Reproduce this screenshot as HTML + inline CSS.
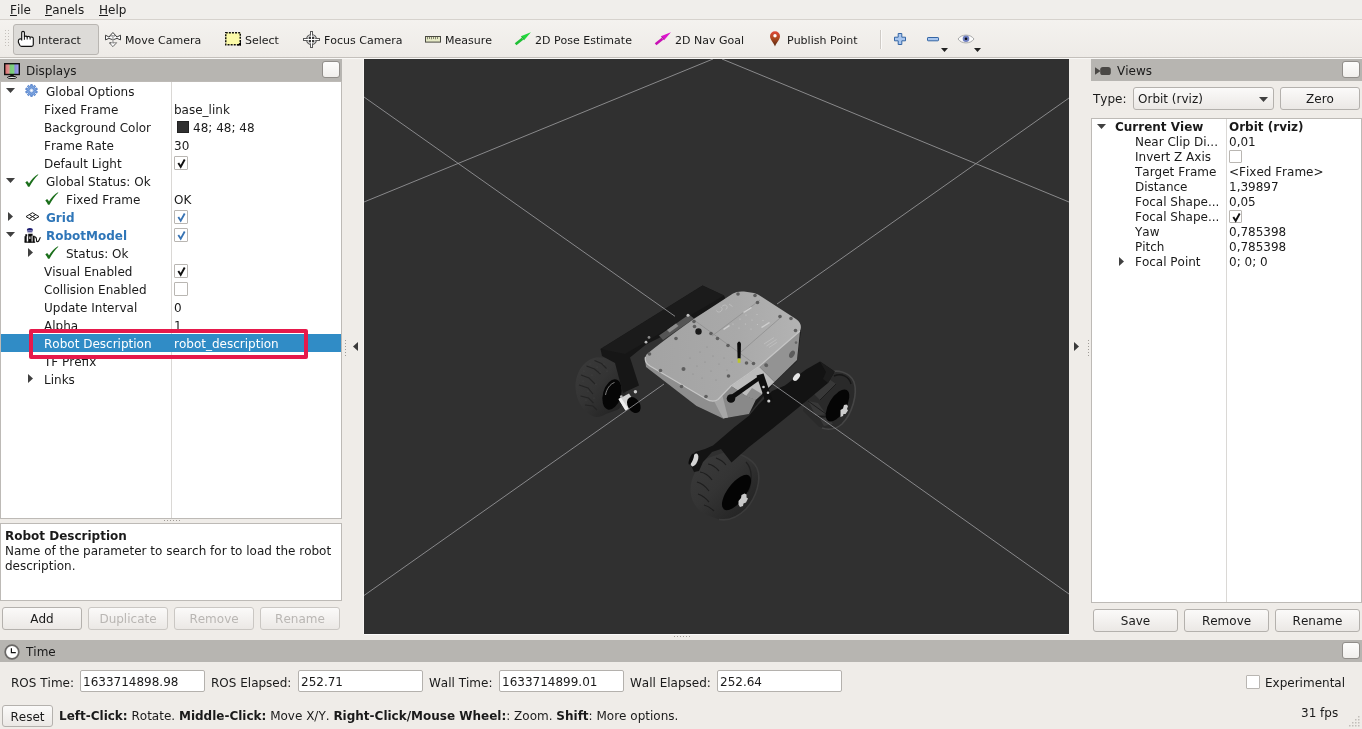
<!DOCTYPE html>
<html lang="en">
<head>
<meta charset="utf-8">
<title>RViz</title>
<style>
*{box-sizing:border-box;margin:0;padding:0}
html,body{width:1362px;height:729px;overflow:hidden}
body{position:relative;will-change:transform;font-kerning:none;background:#efece8;font-family:"DejaVu Sans","Liberation Sans",sans-serif;font-size:12px;color:#1a1a1a;line-height:14px}
.abs{position:absolute}
.t{position:absolute;white-space:nowrap;line-height:14px}
u{text-decoration:underline;text-underline-offset:1px}
/* menubar */
#menubar{position:absolute;left:0;top:0;width:1362px;height:20px;border-bottom:1px solid #d6d2cd;background:#f0eeeb}
/* toolbar */
#toolbar{position:absolute;left:0;top:20px;width:1362px;height:38px;border-bottom:1px solid #c4c0bb;font-size:11px;background:linear-gradient(#f4f2ef,#eeebe7)}
#toolbar .t{line-height:13px;top:14px}
#tb-interact{position:absolute;left:13px;top:4px;width:86px;height:31px;border:1px solid #b9b6b2;border-radius:3px;background:#dddbd8}
/* dock title */
.dock-title{position:absolute;height:22px;background:#b7b5b1}
.dock-btn{position:absolute;width:18px;height:17px;border:1px solid #918e8a;border-radius:3px;background:linear-gradient(#fdfdfc,#f1efec)}
/* trees */
.tree{position:absolute;background:#fff;border:1px solid #bdbab6}
.btn{position:absolute;height:23px;border:1px solid #b4b1ad;border-radius:3px;background:linear-gradient(#fbfaf9,#ebe8e5);text-align:center;line-height:23px;font-size:12px}
.btn.dis{color:#b9b6b3;border-color:#cac7c3}
.field{position:absolute;height:22px;border:1px solid #b4b1ad;border-radius:2px;background:#fff;line-height:22px;padding-left:2px}
.cb{position:absolute;width:13px;height:13px;border:1px solid #b9b6b2;background:#fff;border-radius:1px}

.row{position:absolute;z-index:1;left:0;width:340px;height:18px;line-height:18px;white-space:nowrap}
.row span{position:absolute;top:1px}
.row .v{left:173px}
.row.sel{background:#308cc6;color:#fff}
.b{font-weight:bold;color:#2f76b8}
.ad{position:absolute;width:9px;height:5px;background:#404040;clip-path:polygon(0 0,100% 0,50% 100%)}
.ar{position:absolute;width:5px;height:9px;background:#404040;clip-path:polygon(0 0,100% 50%,0 100%)}
.row .cb{top:2px;left:173px;width:14px;height:14px}
.ic{position:absolute}
.vrow{position:absolute;left:0;width:269px;height:15px;line-height:15px;white-space:nowrap}
.vrow span{position:absolute;top:1px}
.vrow .v{left:137px}
.vrow .cb{top:1px;left:137px;width:13px;height:13px}
</style>
</head>
<body>

<!-- MENUBAR -->
<div id="menubar">
  <span class="t" style="left:10px;top:3px"><u>F</u>ile</span>
  <span class="t" style="left:45px;top:3px"><u>P</u>anels</span>
  <span class="t" style="left:99px;top:3px"><u>H</u>elp</span>
</div>

<!-- TOOLBAR -->
<div id="toolbar">
  <div id="tb-interact"></div>
  <svg class="abs" style="left:4px;top:9px" width="6" height="20" viewBox="0 0 6 20"><g fill="#c4c0bb"><rect x="1" y="1" width="1" height="1"/><rect x="4" y="1" width="1" height="1"/><rect x="1" y="4" width="1" height="1"/><rect x="4" y="4" width="1" height="1"/><rect x="1" y="7" width="1" height="1"/><rect x="4" y="7" width="1" height="1"/><rect x="1" y="10" width="1" height="1"/><rect x="4" y="10" width="1" height="1"/><rect x="1" y="13" width="1" height="1"/><rect x="4" y="13" width="1" height="1"/><rect x="1" y="16" width="1" height="1"/><rect x="4" y="16" width="1" height="1"/></g></svg>
  <svg class="abs" style="left:17px;top:10px" width="18" height="18" viewBox="-1 -1 18 18"><path d="M3.700 9.500V1.600C3.700 -.1 6.400 -.1 6.400 1.600V5.600C7.200 5 8.800 5 9.200 5.900C10 5.200 11.700 5.300 12.100 6.300C13 5.700 15.300 6 15.300 7.600V13.600C15.300 14.800 14.600 15.400 13.600 15.400H3.600C2.600 15.400 2.200 14.900 1.800 14.200L.8 12.300C0 10.700 .2 8.600 1.600 8C2.300 7.700 3 7.800 3.700 8.200" fill="#fff" stroke="#111" stroke-width="1.150" stroke-linejoin="round"/><path d="M6.400 5.600V8.800M9.200 5.900V8.500M12.100 6.300V8.500" stroke="#111" stroke-width="1" fill="none"/></svg>
  <svg class="abs" style="left:104px;top:10px" width="18" height="18" viewBox="-1 -1.600 18 18"><g fill="#fff" stroke="#3e3e3e" stroke-width="1" stroke-linejoin="miter"><path d="M.5 3.600 L3.900 5.400 L7.900 .9 L12 5.400 L15.500 3.600 V8.300 L12 6.800 Q8 9.600 3.900 6.800 L.5 8.300z"/><path d="M4.400 11.200 H11.500 L7.900 15.100z" stroke-dasharray="2.200 .8"/></g><path d="M3.900 5.400 Q8 2.800 12 5.400" fill="none" stroke="#3e3e3e" stroke-width="1" stroke-dasharray="1.600 .9"/><path d="M7.300 3.500h1.300v8H7.300z" fill="#a4a4a4"/></svg>
  <svg class="abs" style="left:225px;top:12px" width="16" height="14" viewBox="0 0 16 14"><rect x="0.5" y="0.5" width="15" height="12.5" fill="#fbfaa8"/><rect x="0.75" y="0.75" width="14.5" height="12" fill="none" stroke="#111" stroke-width="1.5" stroke-dasharray="2 1.1"/><path d="M16 9.5V13.5H12z" fill="#000"/></svg>
  <svg class="abs" style="left:303px;top:11px" width="17" height="17" viewBox="0 0 17 17"><circle cx="8.500" cy="8.500" r="5" fill="#e6e6e6" stroke="#5a5a5a" stroke-width="1.100"/><path d="M7 0h3v17H7zM0 7h17v3H0z" fill="#5a5a5a"/><circle cx="8.500" cy="8.500" r="3.900" fill="#e6e6e6"/><path d="M5.800 5.800h2.200v2.200h-2.200zM9 5.800h2.200v2.200H9zM5.800 9h2.200v2.200h-2.200zM9 9h2.200v2.200H9z" fill="#3a3a3a"/><path d="M8 1h1v15H8zM1 8h15v1H1z" fill="#fff"/></svg>
  <svg class="abs" style="left:425px;top:16px" width="16" height="7" viewBox="0 0 16 7"><rect x=".5" y=".5" width="15" height="5.600" fill="#e6eac6" stroke="#4a4a42" stroke-width="1"/><path d="M2.5 1v2.300M4.500 1v2M6.500 1v2.300M8.500 1v2M10.500 1v2.300M12.500 1v2" stroke="#6a6a5a" stroke-width=".8"/></svg>
  <svg class="abs" style="left:514px;top:11px" width="18" height="15" viewBox="0 0 18 15"><path d="M1.600 13.200 L8.500 7.700" stroke="#1fbf35" stroke-width="2.700" fill="none"/><path d="M6.900 5.200 L16.900 1.300 L10.100 9.300z" fill="#22d63c"/><path d="M6.900 5.200 L10.100 9.300 L9.200 6.800z" fill="#14962a"/></svg>
  <svg class="abs" style="left:654px;top:11px" width="18" height="15" viewBox="0 0 18 15"><path d="M1.600 13.200 L8.500 7.700" stroke="#c811b4" stroke-width="2.700" fill="none"/><path d="M6.900 5.200 L16.900 1.300 L10.100 9.300z" fill="#dc14cc"/><path d="M6.900 5.200 L10.100 9.300 L9.200 6.800z" fill="#96108a"/></svg>
  <svg class="abs" style="left:769px;top:11px" width="12" height="16" viewBox="0 0 12 16"><defs><linearGradient id="pin" x1="0" x2="0" y1="0" y2="1"><stop offset="0" stop-color="#e2483a"/><stop offset=".45" stop-color="#b04a22"/><stop offset="1" stop-color="#56260e"/></linearGradient></defs><path d="M6 15.400C4.600 11.500 1 8.600 1 5.200A5 5 0 0 1 11 5.200C11 8.600 7.400 11.500 6 15.400z" fill="url(#pin)"/><circle cx="6" cy="4.800" r="1.700" fill="#fff"/></svg>
  <div class="abs" style="left:880px;top:10px;width:1px;height:19px;background:#cfcbc6"></div><div class="abs" style="left:881px;top:10px;width:1px;height:19px;background:#fbfaf9"></div>
  <svg class="abs" style="left:893px;top:12px" width="14" height="14" viewBox="-1 -1 14 14"><path d="M4.200.5h3.600v3.700h3.700v3.600H7.800v3.700H4.200V7.800H.5V4.200h3.700z" fill="#a9c6ee" stroke="#3465a4" stroke-width="1" stroke-linejoin="round"/></svg>
  <svg class="abs" style="left:926px;top:16px" width="14" height="6" viewBox="-1 -1 14 6"><rect x=".5" y=".5" width="11" height="3.300" rx=".6" fill="#a9c6ee" stroke="#3465a4" stroke-width="1"/></svg>
  <i class="ad" style="left:941px;top:28px;width:7px;height:4px;background:#222"></i>
  <svg class="abs" style="left:957px;top:13px" width="18" height="12" viewBox="0 0 18 12"><path d="M1 6C4.500 .8 13.500 .8 17 6 13.500 11.200 4.500 11.200 1 6z" fill="#fbfbfb" stroke="#a8a8a8" stroke-width="1"/><circle cx="9" cy="5.800" r="3.300" fill="#6f7fc0"/><circle cx="9" cy="5.800" r="1.300" fill="#0a0a14"/></svg>
  <i class="ad" style="left:974px;top:28px;width:7px;height:4px;background:#222"></i>

  <span class="t" style="left:38px">Interact</span>
  <span class="t" style="left:125px">Move Camera</span>
  <span class="t" style="left:245px">Select</span>
  <span class="t" style="left:324px">Focus Camera</span>
  <span class="t" style="left:445px">Measure</span>
  <span class="t" style="left:535px">2D Pose Estimate</span>
  <span class="t" style="left:675px">2D Nav Goal</span>
  <span class="t" style="left:787px">Publish Point</span>
</div>

<div class="abs" style="left:0;top:58px;width:1362px;height:1px;background:#f9f8f6"></div>

<!-- DISPLAYS PANEL -->
<div id="displays">
  <div class="dock-title" style="left:0;top:59px;width:342px"></div>
  <svg class="abs" style="left:4px;top:63px" width="16" height="16" viewBox="0 0 16 16"><defs><linearGradient id="rgb" x1="0" x2="1" y1="0" y2="0"><stop offset="0" stop-color="#d86a6a"/><stop offset=".28" stop-color="#e09090"/><stop offset=".4" stop-color="#78cc78"/><stop offset=".6" stop-color="#80d080"/><stop offset=".72" stop-color="#8888dd"/><stop offset="1" stop-color="#a8a8ea"/></linearGradient></defs><rect x="0.7" y="0.7" width="14.6" height="10.8" fill="url(#rgb)" stroke="#111" stroke-width="1.4"/><rect x="6.3" y="11.8" width="3.4" height="2" fill="#111"/><ellipse cx="8" cy="14.4" rx="4.6" ry="1.1" fill="#eee" stroke="#111" stroke-width="1"/></svg>
  <span class="t" style="left:26px;top:64px">Displays</span>
  <div class="dock-btn" style="left:322px;top:61px"></div>
  <div class="tree" id="dtree" style="left:0;top:81px;width:342px;height:438px">
    <div class="row" style="top:0px"><i class="ad" style="left:5px;top:6px"></i><svg class="ic" style="left:24px;top:2px" width="13" height="13" viewBox="-7 -7 14 14"><path d="M-0.88 -6.34 L0.88 -6.34 L0.88 -4.62 L2.00 -4.25 L3.01 -5.65 L4.44 -4.61 L3.43 -3.22 L4.12 -2.26 L5.76 -2.80 L6.30 -1.12 L4.66 -0.59 L4.66 0.59 L6.30 1.12 L5.76 2.80 L4.12 2.26 L3.43 3.22 L4.44 4.61 L3.01 5.65 L2.00 4.25 L0.88 4.62 L0.88 6.34 L-0.88 6.34 L-0.88 4.62 L-2.00 4.25 L-3.01 5.65 L-4.44 4.61 L-3.43 3.22 L-4.12 2.26 L-5.76 2.80 L-6.30 1.12 L-4.66 0.59 L-4.66 -0.59 L-6.30 -1.12 L-5.76 -2.80 L-4.12 -2.26 L-3.43 -3.22 L-4.44 -4.61 L-3.01 -5.65 L-2.00 -4.25 L-0.88 -4.62z" fill="#7ea6e0" stroke="#3f72c4" stroke-width=".8" stroke-linejoin="round"/><circle r="2.700" fill="#bcd0f0" stroke="#3f72c4" stroke-width=".7"/><circle r="1.100" fill="#fff"/></svg><span style="left:45px">Global Options</span></div>
    <div class="row" style="top:18px"><span style="left:43px">Fixed Frame</span><span class="v">base_link</span></div>
    <div class="row" style="top:36px"><span style="left:43px">Background Color</span><i class="ic" style="left:176px;top:3px;width:12px;height:12px;background:#303030;border:1px solid #222"></i><span style="left:192px">48; 48; 48</span></div>
    <div class="row" style="top:54px"><span style="left:43px">Frame Rate</span><span class="v">30</span></div>
    <div class="row" style="top:72px"><span style="left:43px">Default Light</span><i class="cb"><svg class="ic" style="left:1px;top:1px" width="11" height="11" viewBox="0 0 11 11"><path d="M2.300 5 L4.700 8.800 L8.700 1.500" fill="none" stroke="#111" stroke-width="1.900"/></svg></i></div>
    <div class="row" style="top:90px"><i class="ad" style="left:5px;top:6px"></i><svg class="ic" style="left:24px;top:2px" width="14" height="14" viewBox="0 0 14 14"><path d="M.3 8.500L2.100 7C3 7.800 3.600 8.700 4 9.600C6.200 5.800 9.300 2.500 13 .3L13.300 .8C10 4 6.800 8.200 4.500 12.800L3 12.800C2.400 11.200 1.400 9.700 .3 8.500z" fill="#1b6f1b"/></svg><span style="left:45px">Global Status: Ok</span></div>
    <div class="row" style="top:108px"><svg class="ic" style="left:44px;top:2px" width="14" height="14" viewBox="0 0 14 14"><path d="M.3 8.500L2.100 7C3 7.800 3.600 8.700 4 9.600C6.200 5.800 9.300 2.500 13 .3L13.300 .8C10 4 6.800 8.200 4.500 12.800L3 12.800C2.400 11.200 1.400 9.700 .3 8.500z" fill="#1b6f1b"/></svg><span style="left:65px">Fixed Frame</span><span class="v">OK</span></div>
    <div class="row" style="top:126px"><i class="ar" style="left:7px;top:4px"></i><svg class="ic" style="left:24px;top:4px" width="15" height="10" viewBox="0 0 15 10"><g fill="none" stroke="#1c1c1c" stroke-width="1"><path d="M1 4.600 L7.500 .7 L14 4.600 L7.500 8.500z"/><path d="M4.250 2.650 L10.750 6.550 M10.750 2.650 L4.250 6.550"/></g></svg><span class="b" style="left:45px">Grid</span><i class="cb"><svg class="ic" style="left:1px;top:1px" width="11" height="11" viewBox="0 0 11 11"><path d="M2.300 5 L4.700 8.800 L8.700 1.500" fill="none" stroke="#3873b3" stroke-width="1.800"/></svg></i></div>
    <div class="row" style="top:144px"><i class="ad" style="left:5px;top:6px"></i><svg class="ic" style="left:23px;top:2px" width="17" height="15" viewBox="0 0 17 15"><ellipse cx="5.900" cy="2" rx="3" ry="2" fill="#1c1c70"/><rect x="3.200" y="2.500" width="5.400" height="1.100" fill="#d4d4ee"/><rect x="3.400" y="3.600" width="5" height=".7" fill="#1c1c70"/><path d="M1.300 6.300h1.900v2h-.5v6h-2.200v-6h.8z M4.200 5.800h4.400v2h-1v6.800h-3.400z M8.600 7.800h2v6.800h-2z" fill="#0c0c0c"/><path d="M5.300 8.500h1.100v2.500h-1.100z" fill="#e8e8e8"/><path d="M10.300 8.600c2 .2 2.300 2.400 2.200 4 .1 1.400 1.600 1.300 2.200 .3l1.700-3.600" fill="none" stroke="#111" stroke-width="1.100"/><rect x=".6" y="13.600" width="10.600" height="1.100" fill="#0c0c0c"/></svg><span class="b" style="left:45px">RobotModel</span><i class="cb"><svg class="ic" style="left:1px;top:1px" width="11" height="11" viewBox="0 0 11 11"><path d="M2.300 5 L4.700 8.800 L8.700 1.500" fill="none" stroke="#3873b3" stroke-width="1.800"/></svg></i></div>
    <div class="row" style="top:162px"><i class="ar" style="left:27px;top:4px"></i><svg class="ic" style="left:44px;top:2px" width="14" height="14" viewBox="0 0 14 14"><path d="M.3 8.500L2.100 7C3 7.800 3.600 8.700 4 9.600C6.200 5.800 9.300 2.500 13 .3L13.300 .8C10 4 6.800 8.200 4.500 12.800L3 12.800C2.400 11.200 1.400 9.700 .3 8.500z" fill="#1b6f1b"/></svg><span style="left:65px">Status: Ok</span></div>
    <div class="row" style="top:180px"><span style="left:43px">Visual Enabled</span><i class="cb"><svg class="ic" style="left:1px;top:1px" width="11" height="11" viewBox="0 0 11 11"><path d="M2.300 5 L4.700 8.800 L8.700 1.500" fill="none" stroke="#111" stroke-width="1.900"/></svg></i></div>
    <div class="row" style="top:198px"><span style="left:43px">Collision Enabled</span><i class="cb"></i></div>
    <div class="row" style="top:216px"><span style="left:43px">Update Interval</span><span class="v">0</span></div>
    <div class="row" style="top:234px"><span style="left:43px">Alpha</span><span class="v">1</span></div>
    <div class="row sel" style="top:252px"><span style="left:43px">Robot Description</span><span class="v">robot_description</span></div>
    <div class="row" style="top:270px"><span style="left:43px">TF Prefix</span></div>
    <div class="row" style="top:288px"><i class="ar" style="left:27px;top:4px"></i><span style="left:43px">Links</span></div>
    <div class="abs" style="left:170px;top:0;width:1px;height:436px;background:#dad8d5"></div>
  </div>
  <div class="abs" style="left:29px;top:329px;width:279px;height:30px;border:4px solid #e6194b;border-radius:2px;z-index:3"></div>
  <div class="tree" style="left:0;top:523px;width:342px;height:78px"><span class="t" style="left:4px;top:5px;font-weight:bold;line-height:15px">Robot Description</span><span class="t" style="left:4px;top:20px;line-height:15px">Name of the parameter to search for to load the robot<br>description.</span></div>
  <div class="btn" style="left:2px;top:607px;width:80px">Add</div>
  <div class="btn dis" style="left:88px;top:607px;width:80px">Duplicate</div>
  <div class="btn dis" style="left:174px;top:607px;width:80px">Remove</div>
  <div class="btn dis" style="left:260px;top:607px;width:80px">Rename</div>
</div>

<!-- 3D VIEW -->
<div id="view3d" class="abs" style="left:364px;top:59px;width:705px;height:575px;background:#303030;overflow:hidden">
<!--ROBOT-START-->
<svg class="abs" style="left:0;top:0" width="705" height="575" viewBox="364 59 705 575">
<defs>
  <linearGradient id="plate" x1="0" y1="0" x2="1" y2="0"><stop offset="0" stop-color="#a3a3a3"/><stop offset=".6" stop-color="#a9a9a9"/><stop offset="1" stop-color="#b3b3b3"/></linearGradient>
  <linearGradient id="tyre" x1="0" y1="0" x2="1" y2="1"><stop offset="0" stop-color="#3b3b3b"/><stop offset=".45" stop-color="#343434"/><stop offset="1" stop-color="#1e1e1e"/></linearGradient>
</defs>
<!-- grid lines behind robot -->
<g stroke="#a2a2a4" stroke-width="1" fill="none" opacity=".78">
  <path d="M1069 98 L777 304"/>
  <path d="M713 59 L364 202"/>
  <path d="M722 59 L1069 202"/>
</g>

<!-- LEFT WHEEL -->
<g id="wheelL">
  <path d="M575.500 387 C575.500 371 585 359 597 357.200 L610 358 C620 362 626 374 626 388 C626 400 622 408 617 410 L606 414 C602 416.500 598 417.500 595 416.800 C585 414 576 402 575.500 387z" fill="url(#tyre)"/>
  <g stroke="#242424" stroke-width="1.100" fill="none"><path d="M581 375l8 3 6 6M579 385l9 3 5 6M580.500 396l8 2 5 5M585 405l8 1 4 4M586.500 366l8 3 6 5M594.500 360.500l7 3 5 5"/></g>
  <g fill="#4a4a4a"><circle cx="584" cy="371" r=".5"/><circle cx="590" cy="364" r=".5"/><circle cx="597" cy="367" r=".5"/><circle cx="583" cy="381" r=".5"/><circle cx="592" cy="375" r=".5"/><circle cx="600" cy="372" r=".5"/><circle cx="588" cy="391" r=".5"/><circle cx="596" cy="384" r=".5"/><circle cx="586" cy="400" r=".5"/><circle cx="604" cy="364" r=".5"/><circle cx="607" cy="371" r=".5"/><circle cx="594" cy="398" r=".5"/></g>
  <ellipse cx="612" cy="394.500" rx="9" ry="15.500" fill="#060606" transform="rotate(16 612 394.500)"/>
  <path d="M605.500 395 C606.500 389 610 384 614.500 382.500" fill="none" stroke="#8a8a8a" stroke-width=".9"/>
</g>
<!-- LEFT ROCKER -->
<path d="M600.500 349 L702.500 285.500 L724 295.500 L726 300 L661 337 L646 344.500 L630 357.500 L639 385.500 L623 393 L615 363 L602 356z" fill="#161616"/>
<path d="M600.500 349 L702.500 285.500 L724 295.500 L625 354z" fill="#1b1b1b"/>
<path d="M364 97 L675 316.300" stroke="#a2a2a4" stroke-width="1" fill="none" opacity=".78"/>
<!-- left motor -->
<path d="M618.500 399 L629 393.500 L636.500 405 L625.500 410.500z" fill="#d2d2d2"/>
<path d="M618.500 399 L621 397.700 L628.500 409 L625.500 410.500z" fill="#f0f0f0"/>
<ellipse cx="633.800" cy="405" rx="6" ry="8.600" fill="#040404" transform="rotate(-32 633.800 405)"/>
<circle cx="635.400" cy="391.800" r="1.700" fill="#cfcfcf"/><circle cx="621.300" cy="396.700" r="1.400" fill="#bdbdbd"/>

<path d="M659 335.500 L689 314.500 L694 318.500 L663 340z" fill="#555"/>
<path d="M667 330 L676 323.500 L678.500 326 L669.500 332.500z" fill="#8c8c8c"/>
<circle cx="688" cy="315.300" r="1.500" fill="#c4c4c4"/><circle cx="646" cy="342.200" r="1.400" fill="#bdbdbd"/><circle cx="649" cy="337.400" r="1.400" fill="#8a8a8a"/>
<!-- CHASSIS -->
<path d="M645 360 L646 367 L696.500 406 L723 418.500 L749 414 L775 382 L797 361 L801 331z" fill="#1a1a1a"/>
<path d="M645 360 L646 367 L696.500 406 L723 418.500 L716 401z" fill="#8e8e8e"/>
<path d="M714 401 L731 386 L746 396 L756 399.500 L749 414 L723 418.500z" fill="#898989"/>
<path d="M714 401 L723 418.500 L728 417.600 L722 394z" fill="#a6a6a6"/>
<path d="M759 366.500 L800 331 L797 360 L774.500 382z" fill="#939393"/>
<ellipse cx="792" cy="354.200" rx="2.500" ry="4" fill="#5c5c5c" transform="rotate(28 792 354.200)"/><circle cx="796" cy="342.600" r="1.300" fill="#666"/><circle cx="766.500" cy="365.500" r="1.700" fill="#666"/>

<!-- top plate -->
<path d="M733 293.500 Q737 291 744 291.500 L754 293 Q758 294 762 297 L796 319 Q803 324 800 331 L759 366.500 L731 386 L718 399.500 Q713 403 706 399 L650 366 Q642.500 361 646.500 354.500 Q660 343 693 319.500z" fill="url(#plate)"/>
<path d="M800 331 L759 366.500 L731 386 L718 399.500 Q713 403 706 399 L650 366 Q644 362 645.500 357" fill="none" stroke="#c6c6c6" stroke-width="1.200"/>
<!-- recess panel -->
<path d="M731 386 L759 366.500 L774.500 382 L756 399.500 L746 396z" fill="#bcbcbc"/>
<path d="M746 396 L756 399.500 L762 394 L752 388z" fill="#8d8d8d"/>
<!-- plate detail lines -->
<g stroke="#8f8f8f" stroke-width=".8" fill="none">
  <path d="M694 320 L752 362"/>
  <path d="M712 336 L760 300"/>
  <path d="M741 352 L780 318"/>
</g>
<g fill="#cfcfcf"><path d="M723 329 l6-4 1 1-6 4z"/><path d="M743 312 l8-5 1 1-8 5z"/><path d="M761 327 l8-5 1 1-8 5z"/></g>
<g fill="none" stroke="#c2c2c2" stroke-width=".8"><path d="M716.500 310.500a3 2.400 -30 1 0 4-3.500M722 306.500a3 2.400 -30 1 1 3.500 3.200M729 304l3.500 2.500"/><path d="M764 344l10-6.500M766.500 346l10-6.500M769 347.500l8-5.200"/></g>
<g fill="#c9c9c9"><circle cx="740" cy="319" r=".6"/><circle cx="746" cy="315" r=".6"/><circle cx="752" cy="320" r=".6"/><circle cx="745.500" cy="324" r=".6"/><circle cx="739" cy="328" r=".6"/><circle cx="751" cy="329" r=".6"/><circle cx="757.500" cy="324.500" r=".6"/><circle cx="763" cy="320.500" r=".6"/><circle cx="733" cy="324" r=".6"/><circle cx="757" cy="314.500" r=".6"/></g>
<g fill="#8a8a8a"><circle cx="700" cy="352" r=".6"/><circle cx="707" cy="347" r=".6"/><circle cx="713" cy="356" r=".6"/><circle cx="705" cy="362" r=".6"/><circle cx="697" cy="366" r=".6"/><circle cx="719" cy="364" r=".6"/><circle cx="711" cy="371" r=".6"/><circle cx="724" cy="358" r=".6"/><circle cx="690" cy="358" r=".6"/><circle cx="716" cy="380" r=".6"/><circle cx="727" cy="370" r=".6"/><circle cx="702" cy="378" r=".6"/><circle cx="693" cy="374" r=".6"/><circle cx="732" cy="362" r=".6"/></g>
<!-- screws -->
<g fill="#5e5e5e">
  <circle cx="738" cy="294" r="1.800"/><circle cx="755" cy="295.500" r="1.800"/><circle cx="757.500" cy="302.500" r="1.800"/>
  <circle cx="780" cy="316.500" r="1.800"/><circle cx="791" cy="318.500" r="1.800"/><circle cx="795.500" cy="330.500" r="1.800"/>
  <circle cx="694" cy="321.500" r="1.800"/><circle cx="694.500" cy="326.500" r="1.800"/><circle cx="676" cy="338.500" r="1.800"/>
  <circle cx="649.500" cy="354" r="1.800"/><circle cx="660.500" cy="370.500" r="1.800"/><circle cx="683.500" cy="369" r="2"/>
  <circle cx="681.500" cy="386.500" r="1.800"/><circle cx="706" cy="396.500" r="1.800"/><circle cx="728.500" cy="376" r="1.800"/>
  <circle cx="711" cy="333.500" r="1.800"/><circle cx="717.500" cy="338.500" r="1.800"/><circle cx="728" cy="345.500" r="1.800"/>
  <circle cx="746.500" cy="363" r="1.800"/><circle cx="753.500" cy="363.500" r="1.800"/><circle cx="766" cy="365" r="1.800"/>
  
</g>
<circle cx="698.500" cy="331.500" r="3.200" fill="#1a1a1a"/>
<!-- antenna -->
<path d="M737.200 343.500 Q739.100 339.500 741 343.500 L740.600 358.500 L737.600 358.500z" fill="#0c0c0c"/>
<rect x="737.700" y="358.500" width="2.800" height="4.300" fill="#bcc62a"/>

<!-- RIGHT WHEEL -->
<g id="wheelR">
  <path d="M806 392 L826 374 C836 368 850 372 854 382 C858 394 852 414 842 424 C834 431 824 430 818 426 L803 411z" fill="#2a2a2a"/>
  <path d="M812 392 L829 379 L836 384 L820 400z M808 401 L818 403 L826 414 L816 416z M820 419 L828 417 L833 424 L824 426z" fill="#383838"/>
  <path d="M812 392 L829 379 M820 400 L836 384 M808 401 L826 414 M816 416 L828 417" stroke="#1c1c1c" stroke-width="1" fill="none"/>
  <path d="M826 374 C836 368 850 372 854 382 C858 394 852 414 842 424 C836 429.500 828 430 822 428" fill="none" stroke="#454545" stroke-width="1.600"/>
  <path d="M834 376 C841 373 849 376 851 384" fill="none" stroke="#161616" stroke-width="1.400"/>
  <ellipse cx="837.500" cy="405.500" rx="8.500" ry="18" fill="#050505" transform="rotate(31 837.500 405.500)"/>
  <path d="M840.500 410 l2.500-1.500 1-3.500 2.500-.5 1.500 1.500-1 3 1 1.500-2.500 3.500-2 0-.5 2-2.500 1z" fill="#cdcdcd"/>
</g>
<!-- BOTTOM WHEEL -->
<g id="wheelB">
  <path d="M690.500 491 C690 478 698 464 708 458 L726 452 C738 452 752 458 757 468 C762 480 756 498 746 509 C738 517 728 521 719 519.500 L704 514 C696 509 691 500 690.500 491z" fill="url(#tyre)"/>
  <path d="M726 452 C738 452 752 458 757 468 C762 480 756 498 746 509 C738 517 728 521 719 519.500" fill="none" stroke="#3b3b3b" stroke-width="1.600"/>
  <path d="M700 472q7 1 12 8M697 482q7 2 12 9M698 494q6 2 11 8M704 505q5 1 10 6M708 464q6 1 11 7M716 458q6 2 10 7" stroke="#1e1e1e" stroke-width="1.200" fill="none"/><path d="M746 462 C752 468 753 480 748 492" fill="none" stroke="#202020" stroke-width="1.300"/>
  <ellipse cx="736.500" cy="492.500" rx="9" ry="21" fill="#040404" transform="rotate(37 736.500 492.500)"/>
  <path d="M738.500 501 l2.500-3 .5-3 3-1.500 2 1 0 3 1.500 1-2 4-2.500 1-.5 2.500-3 1-1.500-2.500z" fill="#c8c8c8"/>
</g>
<!-- RIGHT ROCKER -->
<path d="M820 361.500 L834.700 371.400 L828 383 L798.500 407.600 L772 429 L749 447 L731.500 462.500 L721 449 L712 452 L703 462 L699 471 L694 472 L689.500 462 L695 452 L705 449 L713 445.500 L734 427.400 L749 415.800 L759 404 L772 391 L785 385.400 L796 377 L806 369.500z" fill="#131313"/>
<path d="M820 361.500 L834.700 371.400 L828 383 L823 379 L826 372z" fill="#1c1c1c"/>
<!-- motors -->
<ellipse cx="796.500" cy="377" rx="2.600" ry="4.600" fill="#e6e6e6" transform="rotate(38 796.500 377)"/>
<ellipse cx="694.500" cy="460" rx="3.200" ry="6.800" fill="#d4d4d4" transform="rotate(22 694.500 460)"/>
<ellipse cx="691.300" cy="459" rx="1.800" ry="6" fill="#0a0a0a" transform="rotate(22 691.300 459)"/>
<!-- differential bar -->
<path d="M729.500 396 L759.500 375.500 L762 378.500 L732 400z" fill="#0e0e0e"/>
<circle cx="731" cy="398.500" r="4.300" fill="#0e0e0e"/>
<path d="M756.500 375.500 L763.500 373.500 L772.500 400 L766 403.500z" fill="#101010"/>
<circle cx="763.500" cy="387" r="1.300" fill="#cfcfcf"/><circle cx="768" cy="392.800" r="1.300" fill="#cfcfcf"/><circle cx="768.800" cy="401" r="1.600" fill="#cfcfcf"/>

<!-- grid lines in front -->
<g stroke="#a2a2a4" stroke-width="1" fill="none" opacity=".78">
  <path d="M772.200 383.700 L1069 594"/>
  <path d="M664 384 L364 595.500"/>
</g>
</svg>
<!--ROBOT-END-->
</div>


<!-- SPLITTER HANDLES -->
<div id="splitters">
  <i class="abs" style="left:345px;top:340px;width:1px;height:1px;background:#a09c97"></i><i class="abs" style="left:345px;top:343px;width:1px;height:1px;background:#a09c97"></i><i class="abs" style="left:345px;top:346px;width:1px;height:1px;background:#a09c97"></i><i class="abs" style="left:345px;top:349px;width:1px;height:1px;background:#a09c97"></i><i class="abs" style="left:345px;top:352px;width:1px;height:1px;background:#a09c97"></i><i class="abs" style="left:345px;top:355px;width:1px;height:1px;background:#a09c97"></i>
  <i class="abs" style="left:353px;top:342px;width:5px;height:9px;background:#3a3a3a;clip-path:polygon(100% 0,0 50%,100% 100%)"></i>
  <i class="abs" style="left:1074px;top:342px;width:5px;height:9px;background:#3a3a3a;clip-path:polygon(0 0,100% 50%,0 100%)"></i>
  <i class="abs" style="left:1088px;top:340px;width:1px;height:1px;background:#a09c97"></i><i class="abs" style="left:1088px;top:343px;width:1px;height:1px;background:#a09c97"></i><i class="abs" style="left:1088px;top:346px;width:1px;height:1px;background:#a09c97"></i><i class="abs" style="left:1088px;top:349px;width:1px;height:1px;background:#a09c97"></i><i class="abs" style="left:1088px;top:352px;width:1px;height:1px;background:#a09c97"></i><i class="abs" style="left:1088px;top:355px;width:1px;height:1px;background:#a09c97"></i>
  <i class="abs" style="left:164px;top:520px;width:1px;height:1px;background:#a09c97"></i><i class="abs" style="left:167px;top:520px;width:1px;height:1px;background:#a09c97"></i><i class="abs" style="left:170px;top:520px;width:1px;height:1px;background:#a09c97"></i><i class="abs" style="left:173px;top:520px;width:1px;height:1px;background:#a09c97"></i><i class="abs" style="left:176px;top:520px;width:1px;height:1px;background:#a09c97"></i><i class="abs" style="left:179px;top:520px;width:1px;height:1px;background:#a09c97"></i>
  <i class="abs" style="left:674px;top:636px;width:1px;height:1px;background:#a09c97"></i><i class="abs" style="left:677px;top:636px;width:1px;height:1px;background:#a09c97"></i><i class="abs" style="left:680px;top:636px;width:1px;height:1px;background:#a09c97"></i><i class="abs" style="left:683px;top:636px;width:1px;height:1px;background:#a09c97"></i><i class="abs" style="left:686px;top:636px;width:1px;height:1px;background:#a09c97"></i><i class="abs" style="left:689px;top:636px;width:1px;height:1px;background:#a09c97"></i>
  <i class="abs" style="left:364px;top:634px;width:705px;height:1px;background:#fbfaf9"></i>
  <i class="abs" style="left:363px;top:59px;width:1px;height:575px;background:#f8f6f4"></i>
</div>

<!-- VIEWS PANEL -->
<div id="views">
  <div class="dock-title" style="left:1091px;top:59px;width:271px"></div>
  <svg class="abs" style="left:1095px;top:66px" width="17" height="10" viewBox="0 0 17 10"><path d="M0 1.2 L5.6 5 L0 8.8z" fill="#4a4845"/><rect x="5.2" y="1" width="10.6" height="8" rx="2.6" fill="#4a4845"/></svg>
  <span class="t" style="left:1117px;top:64px">Views</span>
  <div class="dock-btn" style="left:1342px;top:61px"></div>
  <span class="t" style="left:1093px;top:92px">Type:</span>
  <div class="btn" style="left:1133px;top:87px;width:141px;height:23px;text-align:left;padding-left:4px;line-height:23px">Orbit (rviz)<i class="ad" style="left:125px;top:9px;border-left-width:4px;border-right-width:4px;border-top-width:4px"></i></div>
  <div class="btn" style="left:1280px;top:87px;width:80px;height:23px;line-height:23px">Zero</div>
  <div class="tree" style="left:1091px;top:118px;width:271px;height:485px">
    <div class="vrow" style="top:0px"><i class="ad" style="left:5px;top:5px"></i><span style="left:23px;font-weight:bold">Current View</span><span class="v" style="font-weight:bold">Orbit (rviz)</span></div>
    <div class="vrow" style="top:15px"><span style="left:43px">Near Clip Di...</span><span class="v">0,01</span></div>
    <div class="vrow" style="top:30px"><span style="left:43px">Invert Z Axis</span><i class="cb"></i></div>
    <div class="vrow" style="top:45px"><span style="left:43px">Target Frame</span><span class="v">&lt;Fixed Frame&gt;</span></div>
    <div class="vrow" style="top:60px"><span style="left:43px">Distance</span><span class="v">1,39897</span></div>
    <div class="vrow" style="top:75px"><span style="left:43px">Focal Shape...</span><span class="v">0,05</span></div>
    <div class="vrow" style="top:90px"><span style="left:43px">Focal Shape...</span><i class="cb"><svg class="ic" style="left:1px;top:1px" width="11" height="11" viewBox="0 0 11 11"><path d="M2.300 5 L4.700 8.800 L8.700 1.500" fill="none" stroke="#111" stroke-width="1.900"/></svg></i></div>
    <div class="vrow" style="top:105px"><span style="left:43px">Yaw</span><span class="v">0,785398</span></div>
    <div class="vrow" style="top:120px"><span style="left:43px">Pitch</span><span class="v">0,785398</span></div>
    <div class="vrow" style="top:135px"><i class="ar" style="left:27px;top:3px"></i><span style="left:43px">Focal Point</span><span class="v">0; 0; 0</span></div>
    <div class="abs" style="left:134px;top:0;width:1px;height:483px;background:#dad8d5"></div>
  </div>
  <div class="btn" style="left:1093px;top:609px;width:85px">Save</div>
  <div class="btn" style="left:1184px;top:609px;width:85px">Remove</div>
  <div class="btn" style="left:1275px;top:609px;width:85px">Rename</div>
</div>

<!-- TIME PANEL -->
<div id="time">
  <div class="dock-title" style="left:0;top:640px;width:1362px"></div>
  <svg class="abs" style="left:4px;top:644px" width="16" height="16" viewBox="0 0 16 16"><circle cx="8" cy="8" r="6.8" fill="#fff" stroke="#6a6866" stroke-width="1.7"/><path d="M7.4 4.2V8.6H11.8" fill="none" stroke="#111" stroke-width="1.2"/></svg>
  <span class="t" style="left:26px;top:645px">Time</span>
  <div class="dock-btn" style="left:1342px;top:642px"></div>
  <span class="t" style="left:11px;top:676px">ROS Time:</span><div class="field" style="left:80px;top:670px;width:125px">1633714898.98</div>
  <span class="t" style="left:211px;top:676px">ROS Elapsed:</span><div class="field" style="left:298px;top:670px;width:125px">252.71</div>
  <span class="t" style="left:429px;top:676px">Wall Time:</span><div class="field" style="left:499px;top:670px;width:125px">1633714899.01</div>
  <span class="t" style="left:630px;top:676px">Wall Elapsed:</span><div class="field" style="left:717px;top:670px;width:125px">252.64</div>
  <i class="cb" style="left:1246px;top:675px;width:14px;height:14px"></i><span class="t" style="left:1265px;top:676px">Experimental</span>
</div>

<!-- STATUS BAR -->
<div id="status">
  <div class="btn" style="left:2px;top:705px;width:51px;height:22px;line-height:22px">Reset</div>
  <span class="t" style="left:59px;top:709px"><b>Left-Click:</b> Rotate. <b>Middle-Click:</b> Move X/Y. <b>Right-Click/Mouse Wheel:</b>: Zoom. <b>Shift</b>: More options.</span>
  <span class="t" style="left:1301px;top:706px">31 fps</span>
  <svg class="abs" style="left:1348px;top:715px" width="14" height="14" viewBox="0 0 14 14"><g fill="#c2beb9"><rect x="10" y="1" width="1.500" height="1.500"/><rect x="7" y="4" width="1.500" height="1.500"/><rect x="10" y="4" width="1.500" height="1.500"/><rect x="4" y="7" width="1.500" height="1.500"/><rect x="7" y="7" width="1.500" height="1.500"/><rect x="10" y="7" width="1.500" height="1.500"/><rect x="1" y="10" width="1.500" height="1.500"/><rect x="4" y="10" width="1.500" height="1.500"/><rect x="7" y="10" width="1.500" height="1.500"/><rect x="10" y="10" width="1.500" height="1.500"/></g></svg>
</div>

</body>
</html>
